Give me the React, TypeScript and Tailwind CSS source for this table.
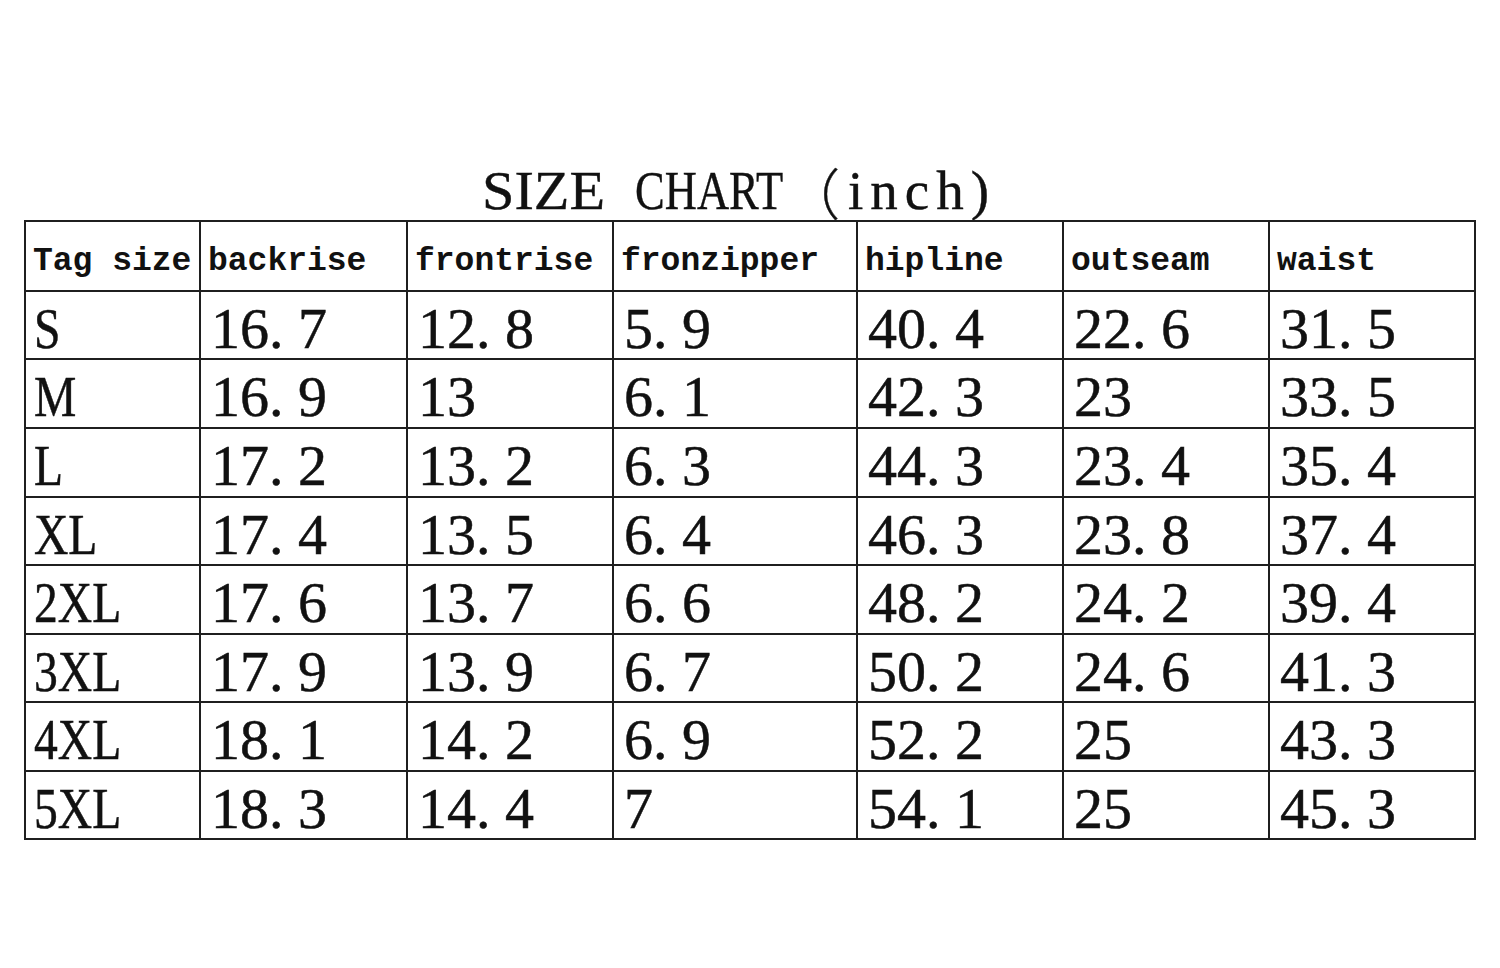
const headers = ['Tag size', 'backrise', 'frontrise', 'fronzipper', 'hipline', 'outseam', 'waist'];

const rows: string[][] = [
  ['S', '16.7', '12.8', '5.9', '40.4', '22.6', '31.5'],
  ['M', '16.9', '13', '6.1', '42.3', '23', '33.5'],
  ['L', '17.2', '13.2', '6.3', '44.3', '23.4', '35.4'],
  ['XL', '17.4', '13.5', '6.4', '46.3', '23.8', '37.4'],
  ['2XL', '17.6', '13.7', '6.6', '48.2', '24.2', '39.4'],
  ['3XL', '17.9', '13.9', '6.7', '50.2', '24.6', '41.3'],
  ['4XL', '18.1', '14.2', '6.9', '52.2', '25', '43.3'],
  ['5XL', '18.3', '14.4', '7', '54.1', '25', '45.3'],
];

// SimSun-style half-width period: dot sits left in a 0.5em cell
const Value: React.FC<{ v: string }> = ({ v }) => {
  const [int, dec] = v.split('.');
  return (
    <span className="whitespace-nowrap">
      {int}
      {dec !== undefined && (
        <>
          <span className="inline-block w-[0.5em]">.</span>
          {dec}
        </>
      )}
    </span>
  );
};

export default function App() {
  return (
    <div className="h-[968px] w-[1500px] overflow-hidden bg-white px-[24px] pt-[163px] text-[#111]">
      <div className="flex h-[57px] justify-center pr-[22px] font-['Liberation_Serif','Noto_Sans_CJK_SC',serif] text-[55px] leading-none whitespace-nowrap [-webkit-text-stroke:0.4px_#111]">
        <span className="inline-block w-[120px]">
          <span className="inline-block origin-left scale-x-[1.06]">SIZE</span>
        </span>
        <span className="ml-[33px] inline-block w-[150px]">
          <span className="inline-block origin-left scale-x-[0.81]">CHART</span>
        </span>
        <span className="inline-block w-[55px] font-['Noto_Sans_CJK_SC',sans-serif] font-light">（</span>
        <span className="ml-[8px] tracking-[7px]">inch)</span>
      </div>

      <div className="grid w-[1452px] grid-cols-[175px_207px_206px_244px_206px_206px_206px] grid-rows-[70px_68px_69px_69px_68px_69px_68px_69px_68px] border-r-2 border-b-2 border-[#1f1f1f]">
        {headers.map((h) => (
          <div
            key={h}
            className="flex items-center whitespace-nowrap border-t-2 border-l-2 border-[#1f1f1f] pt-[10px] pl-[7px] font-['Liberation_Mono',monospace] text-[33px] leading-none font-bold"
          >
            {h}
          </div>
        ))}
        {rows.map((row) =>
          row.map((cell, i) => (
            <div
              key={`${row[0]}-${i}`}
              className="flex items-center border-t-2 border-l-2 border-[#1f1f1f] pt-[7px] pl-[10px] font-['Liberation_Serif',serif] text-[58px] leading-none [-webkit-text-stroke:0.5px_#111]"
            >
              {i === 0 ? (
                <span className="inline-block -ml-[2px] origin-left scale-x-[0.82]">{cell}</span>
              ) : (
                <Value v={cell} />
              )}
            </div>
          ))
        )}
      </div>
    </div>
  );
}
